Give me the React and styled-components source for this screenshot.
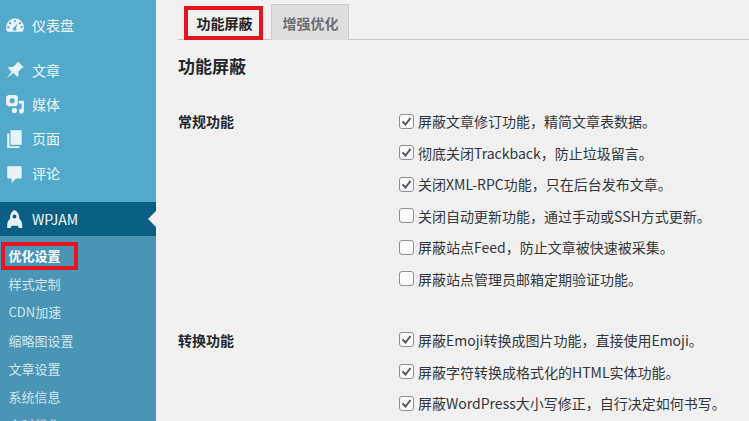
import React from "react";
import styled, { createGlobalStyle } from "styled-components";

const Global = createGlobalStyle`
  html, body { margin: 0; padding: 0; height: 421px; overflow: hidden; background: #f1f1f1; }
  #root { height: 421px; }
`;
const FONT = `"Noto Sans CJK SC", "Noto Sans", sans-serif`;

const Page = styled.div`
  display: flex; width: 749px; height: 421px; overflow: hidden;
  font-family: ${FONT}; background: #f1f1f1; color: #32373c;
`;
const Sidebar = styled.nav`
  width: 156px; height: 421px; overflow: hidden; flex: none; display: flex; flex-direction: column;
  background: #52a9cb; padding-top: 7px; box-sizing: border-box;
`;
const MenuGroup = styled.div`
  display: flex; flex-direction: column; flex: none; margin-bottom: ${p => p.$gap || 0}px;
`;
const MenuItem = styled.div`
  height: ${p => p.$h || 34.2}px; flex: none; display: flex; align-items: center;
  position: relative; padding-left: 5px; gap: 7px;
  font-size: 14px; line-height: 20px; color: #f0f8fb;
  background: ${p => p.$active ? "#0a5f83" : "transparent"};
  &::after {
    content: ${p => p.$active ? '""' : "none"};
    position: absolute; right: 0; top: 50%; margin-top: -8px;
    border: 8px solid transparent; border-right-color: #f1f1f1; border-left-width: 0;
  }
`;
const IconBox = styled.span`
  width: 20px; height: 20px; flex: none; display: block;
  svg { display: block; width: 20px; height: 20px; fill: #e9f4f8; }
`;
const SubMenu = styled.div`
  display: flex; flex-direction: column; background: #4a95b6; padding-top: 6px; flex: none;
`;
const SubItem = styled.div`
  height: 28.2px; flex: none; display: flex; align-items: center; padding-left: 8.500px;
  font-size: 13px; line-height: 18px; color: ${p => p.$current ? "#fff" : "#cfe5ee"};
  font-weight: ${p => p.$current ? 700 : 400};
  position: relative;
`;
const RedFrame = styled.span`
  position: absolute; border: 4px solid #e5141f; pointer-events: none; box-sizing: border-box;
  left: ${p => p.$l}px; top: ${p => p.$t}px; width: ${p => p.$w}px; height: ${p => p.$h}px;
`;
const Main = styled.main`
  flex: 1; min-width: 0; padding: 4px 0 0 22px; display: flex; flex-direction: column;
`;
const Tabs = styled.div`
  display: flex; align-items: flex-end; height: 36px; flex: none; gap: 8px;
  padding-left: 6px; border-bottom: 1px solid #c9c9c9; box-sizing: border-box;
`;
const Tab = styled.div`
  width: ${p => p.$active ? 79 : 78}px; height: ${p => p.$active ? 34 : 36}px;
  box-sizing: border-box; display: flex; padding-left: ${p => p.$active ? 2 : 1}px;
  align-items: center; justify-content: center; font-size: 14px; font-weight: 700;
  position: relative; margin-bottom: -1px;
  color: ${p => p.$active ? "#222" : "#6a6e72"};
  background: ${p => p.$active ? "#f1f1f1" : "#dedede"};
  border: ${p => p.$active ? "none" : "1px solid #cbcbcb"};
  border-bottom: none;
`;
const Title = styled.h2`
  margin: 15px 0 0; font-size: 17px; line-height: 22px; font-weight: 700; color: #23282d;
`;
const Section = styled.section`
  display: flex; margin-top: ${p => p.$top}px;
`;
const SectionLabel = styled.div`
  width: 221px; flex: none; font-size: 14px; font-weight: 700; line-height: 20px; color: #23282d;
`;
const Options = styled.div`
  display: flex; flex-direction: column; gap: 11.6px;
`;
const Option = styled.label`
  display: flex; align-items: center; gap: 4px; height: 20px;
  font-size: 14px; line-height: 20px; color: #32373c; white-space: nowrap;
`;
const Box = styled.span`
  width: 15px; height: 15px; flex: none; box-sizing: border-box; border-radius: 3px;
  border: 1px solid #8c8f94; background: #fbfbfb; display: block;
  svg { display: block; width: 13px; height: 13px; fill: none; stroke: #50575e; stroke-width: 2; }
`;

const Icons = {
  dash: <path d="M9 3a8 8 0 0 0-8 8c0 1.6.5 3 1.2 4h13.6c.7-1 1.2-2.4 1.2-4a8 8 0 0 0-8-8zM9 4.500a1 1 0 1 1 0 2 1 1 0 0 1 0-2zM4.500 6.400a1 1 0 1 1 0 2 1 1 0 0 1 0-2zM13.500 6.400a1 1 0 1 1 0 2 1 1 0 0 1 0-2zM3 10a1 1 0 1 1 0 2 1 1 0 0 1 0-2zM15 10a1 1 0 1 1 0 2 1 1 0 0 1 0-2zM11.600 7.200l-1.700 4.200a1.600 1.600 0 1 1-1.300-.5z" fillRule="evenodd" />,
  pin: <path d="M11.800 1.500l5 5-1.600.6-3.200 3.400.2 3.200-1.400 1.300-3.200-3.300L1.500 16.500l4.300-6-3.100-3.200 1.300-1.300 3.200.2 3.400-3.200z" />,
  media: <path fillRule="evenodd" d="M1 2.500 3 1h7l1.500 1.500v7L10 11H3L1 9.500zM6.500 3.800a2.300 2.300 0 1 0 0 4.600 2.300 2.300 0 0 0 0-4.600zM12.500 6H17v9.500a2.200 2.200 0 1 1-2-2.200V8.500h-2.500zM8.500 12.500a2.300 2.300 0 1 1 0 4.600 2.300 2.300 0 0 1 0-4.600z" />,
  page: <path d="M5 2h10v13H5zM2 5h2v11.500h9v1.500H2z" />,
  comment: <path d="M3 3h11a1 1 0 0 1 1 1v9a1 1 0 0 1-1 1h-4l-4 4v-4H3a1 1 0 0 1-1-1V4a1 1 0 0 1 1-1z" />,
  rocket: <path fillRule="evenodd" d="M8.500 1c3 1.500 4.500 4.500 4.500 8 1.500 1 2.500 3 2.500 6v2h-3l-1-2H6l-1 2H2v-2c0-3 1-5 2.500-6 0-3.500 1-6.500 4-8zM8.500 5a1.800 1.800 0 1 0 0 3.600 1.800 1.800 0 0 0 0-3.600z" />,
};
const Icon = ({ name }) => <IconBox><svg viewBox="0 0 18 18">{Icons[name]}</svg></IconBox>;

const Check = ({ on }) => (
  <Box>{on && <svg viewBox="0 0 13 13"><path d="M2.500 6.500l3 3 5-6.500" /></svg>}</Box>
);

const general = [
  ["屏蔽文章修订功能，精简文章表数据。", true],
  ["彻底关闭Trackback，防止垃圾留言。", true],
  ["关闭XML-RPC功能，只在后台发布文章。", true],
  ["关闭自动更新功能，通过手动或SSH方式更新。", false],
  ["屏蔽站点Feed，防止文章被快速被采集。", false],
  ["屏蔽站点管理员邮箱定期验证功能。", false],
];
const convert = [
  ["屏蔽Emoji转换成图片功能，直接使用Emoji。", true],
  ["屏蔽字符转换成格式化的HTML实体功能。", true],
  ["屏蔽WordPress大小写修正，自行决定如何书写。", true],
];

export default function App() {
  return (
    <Page>
      <Global />
      <Sidebar>
        <MenuGroup $gap={10}>
          <MenuItem $h={36}><Icon name="dash" />仪表盘</MenuItem>
        </MenuGroup>
        <MenuGroup $gap={12.2}>
          <MenuItem><Icon name="pin" />文章</MenuItem>
          <MenuItem><Icon name="media" />媒体</MenuItem>
          <MenuItem><Icon name="page" />页面</MenuItem>
          <MenuItem><Icon name="comment" />评论</MenuItem>
        </MenuGroup>
        <MenuItem $active $h={34}><Icon name="rocket" />WPJAM</MenuItem>
        <SubMenu>
          <SubItem $current>优化设置<RedFrame $l={1} $t={0} $w={77} $h={28} /></SubItem>
          <SubItem>样式定制</SubItem>
          <SubItem>CDN加速</SubItem>
          <SubItem>缩略图设置</SubItem>
          <SubItem>文章设置</SubItem>
          <SubItem>系统信息</SubItem>
          <SubItem>实时优化</SubItem>
        </SubMenu>
      </Sidebar>
      <Main>
        <Tabs>
          <Tab $active>功能屏蔽<RedFrame $l={0} $t={0} $w={79} $h={34} /></Tab>
          <Tab>增强优化</Tab>
        </Tabs>
        <Title>功能屏蔽</Title>
        <Section $top={34}>
          <SectionLabel>常规功能</SectionLabel>
          <Options>
            {general.map(([t, on]) => <Option key={t}><Check on={on} />{t}</Option>)}
          </Options>
        </Section>
        <Section $top={41}>
          <SectionLabel>转换功能</SectionLabel>
          <Options>
            {convert.map(([t, on]) => <Option key={t}><Check on={on} />{t}</Option>)}
          </Options>
        </Section>
      </Main>
    </Page>
  );
}
